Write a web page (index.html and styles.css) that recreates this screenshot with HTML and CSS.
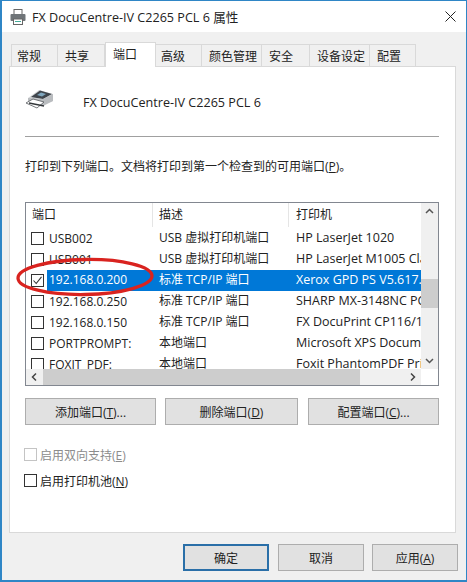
FILE: index.html
```html
<!DOCTYPE html>
<html lang="zh-CN">
<head>
<meta charset="utf-8">
<title>FX DocuCentre-IV C2265 PCL 6 属性</title>
<link rel="stylesheet" href="styles.css">
</head>
<body>
<div class="window">
  <div class="titlebar">
    <svg class="title-icon" width="16" height="16" viewBox="0 0 16 16"><rect x="4" y="0.5" width="8" height="5" fill="#fff" stroke="#666"/><rect x="0.5" y="5" width="15" height="7" rx="1" fill="#6f7478"/><rect x="3.5" y="10" width="9" height="5.5" fill="#fff" stroke="#666"/><rect x="5" y="12" width="6" height="1" fill="#4a9"/></svg>
    <span class="title-text">FX DocuCentre-IV C2265 PCL 6 属性</span>
    <svg class="close-icon" width="11" height="11" viewBox="0 0 11 11"><path d="M0.5 0.5L10.5 10.5M10.5 0.5L0.5 10.5" stroke="#222" stroke-width="1" fill="none"/></svg>
  </div>
  <div class="tabs">
    <div class="tab w47">常规</div>
    <div class="tab w47">共享</div>
    <div class="tab active">端口</div>
    <div class="tab w46 tight">高级</div>
    <div class="tab w60">颜色管理</div>
    <div class="tab w48">安全</div>
    <div class="tab w60">设备设定</div>
    <div class="tab w46">配置</div>
  </div>
  <div class="panel">
    <div class="head">
      <svg class="printer" width="28" height="20" viewBox="0 0 28 20">
        <path d="M2 9L13 1L27 5L27 12L14 17L2 13Z" fill="#d4d6d8"/>
        <path d="M5 8L14 1.5L26 5L17 10Z" fill="#3f454b"/>
        <path d="M11 6L15 3.5L20 5L16 7.500Z" fill="#7fa6bd"/>
        <path d="M2 9L17 10L27 5L27 12L17 17L2 13Z" fill="#b9bcbf"/>
        <path d="M0 14L7 10L18 13L11 19Z" fill="#fff" stroke="#55595d" stroke-width="0.8"/>
        <path d="M3 14L18 17" stroke="#33373a" stroke-width="1.4"/>
      </svg>
      <span class="head-text">FX DocuCentre-IV C2265 PCL 6</span>
    </div>
    <div class="sep"></div>
    <div class="label">打印到下列端口。文档将打印到第一个检查到的可用端口(<u>P</u>)。</div>
    <div class="listframe">
      <div class="listmain">
        <div class="row header">
          <div class="col c1 hcell">端口</div>
          <div class="col c2 hcell">描述</div>
          <div class="col c3 hcell">打印机</div>
        </div>
        <div class="rows">
          <div class="row"><div class="col c1"><span class="box"></span>USB002</div><div class="col c2">USB 虚拟打印机端口</div><div class="col c3">HP LaserJet 1020</div></div>
          <div class="row"><div class="col c1"><span class="box"></span>USB001</div><div class="col c2">USB 虚拟打印机端口</div><div class="col c3">HP LaserJet M1005 Class Driver</div></div>
          <div class="row selected"><div class="col c1"><span class="box"><svg width="11" height="11" viewBox="0 0 11 11"><path d="M1.500 5.500L4.200 8.500L9.500 1.800" fill="none" stroke="#333" stroke-width="1.100"/></svg></span><span class="sel-text">192.168.0.200</span></div><div class="col c2 sel-text">标准 TCP/IP 端口</div><div class="col c3 sel-text">Xerox GPD PS V5.617.8</div></div>
          <div class="row"><div class="col c1"><span class="box"></span>192.168.0.250</div><div class="col c2">标准 TCP/IP 端口</div><div class="col c3">SHARP MX-3148NC PCL6</div></div>
          <div class="row"><div class="col c1"><span class="box"></span>192.168.0.150</div><div class="col c2">标准 TCP/IP 端口</div><div class="col c3">FX DocuPrint CP116/115</div></div>
          <div class="row"><div class="col c1"><span class="box"></span>PORTPROMPT:</div><div class="col c2">本地端口</div><div class="col c3">Microsoft XPS Document Writer</div></div>
          <div class="row"><div class="col c1"><span class="box"></span>FOXIT_PDF:</div><div class="col c2">本地端口</div><div class="col c3">Foxit PhantomPDF Printer</div></div>
        </div>
      </div>
      <div class="vbar">
        <svg class="arrow" width="17" height="17" viewBox="0 0 17 17"><path d="M5 10L8.500 6.500L12 10" fill="none" stroke="#555" stroke-width="1.500"/></svg>
        <div class="vtrack"><div class="vthumb"></div></div>
        <svg class="arrow" width="17" height="17" viewBox="0 0 17 17"><path d="M5 7L8.500 10.500L12 7" fill="none" stroke="#555" stroke-width="1.500"/></svg>
      </div>
      <div class="hbar">
        <svg class="arrow" width="17" height="16" viewBox="0 0 17 16"><path d="M10 4.500L6.500 8L10 11.500" fill="none" stroke="#444" stroke-width="1.500"/></svg>
        <div class="hthumb"></div>
        <svg class="arrow" width="17" height="16" viewBox="0 0 17 16"><path d="M7 4.500L10.500 8L7 11.500" fill="none" stroke="#444" stroke-width="1.500"/></svg>
      </div>
      <div class="corner"></div>
    </div>
    <div class="actions">
      <div class="btn"><span>添加端口(<u>T</u>)...</span></div>
      <div class="btn"><span>删除端口(<u>D</u>)</span></div>
      <div class="btn"><span>配置端口(<u>C</u>)...</span></div>
    </div>
    <div class="checks">
      <div class="check disabled"><span class="box"></span><span>启用双向支持(<u>E</u>)</span></div>
      <div class="check"><span class="box"></span><span>启用打印机池(<u>N</u>)</span></div>
    </div>
  </div>
  <div class="footer">
    <div class="btn ok">确定</div>
    <div class="btn">取消</div>
    <div class="btn"><span>应用(<u>A</u>)</span></div>
  </div>
  <svg class="marker" width="142" height="44" viewBox="0 0 142 44"><ellipse cx="71" cy="21" rx="67" ry="17.500" fill="none" stroke="#d9231f" stroke-width="3.300" transform="rotate(-1 71 21)"/></svg>
</div>
</body>
</html>
```
FILE: styles.css
```css
* { box-sizing: border-box; }
html, body { margin: 0; padding: 0; }
body {
  width: 467px;
  height: 582px;
  overflow: hidden;
  font-family: "Open Sans", "Noto Sans CJK SC", sans-serif;
  font-size: 12px;
  color: #222;
}
u { text-decoration: underline; }
.window {
  position: relative;
  width: 467px;
  height: 582px;
  display: flex;
  flex-direction: column;
  background: #f0f0f0;
  border: 1px solid #2f86c6;
  border-left-width: 2px;
  border-bottom-width: 2px;
}
.titlebar {
  height: 31px;
  background: #fff;
  display: flex;
  align-items: center;
  padding: 0 10px 0 8px;
  flex: none;
}
.title-icon { flex: none; }
.title-text { margin-left: 6px; font-size: 12.600px; flex: 1; white-space: nowrap; color: #222; }
.close-icon { flex: none; }
.tabs {
  display: flex;
  align-items: flex-end;
  height: 34px;
  padding-left: 9px;
  flex: none;
  position: relative;
  z-index: 1;
}
.tab {
  height: 22px;
  background: #f0f0f0;
  border: 1px solid #d9d9d9;
  border-bottom: none;
  border-left-width: 0;
  display: flex;
  align-items: center;
  padding-left: 7px;
  white-space: nowrap;
  color: #222;
}
.tab:first-child { border-left-width: 1px; padding-left: 5px; }
.tab.tight { padding-left: 5px; }
.w47 { width: 47px; }
.w46 { width: 46px; }
.w48 { width: 48px; }
.w60 { width: 60px; }
.tab.active {
  width: 51px;
  height: 25px;
  margin-bottom: -1px;
  background: #fff;
  border-left-width: 1px;
  padding: 0 0 2px 7px;
}
.panel {
  margin-left: 7px;
  width: 447px;
  height: 467px;
  background: #fff;
  border: 1px solid #d9d9d9;
  padding: 22px 16px 0 15px;
  flex: none;
}
.head {
  display: flex;
  height: 26px;
  align-items: center;
}
.printer { align-self: flex-start; flex: none; margin-left: 1px; }
.head-text { margin-left: 29px; font-size: 12.600px; white-space: nowrap; }
.sep { height: 1px; background: #a0a0a0; margin-top: 21px; }
.label { height: 16px; line-height: 15px; margin-top: 22px; white-space: nowrap; }
.listframe {
  margin-top: 27px;
  height: 184px;
  border: 1px solid #828790;
  display: grid;
  grid-template-columns: 395px 17px;
  grid-template-rows: 166px 16px;
}
.listmain { overflow: hidden; background: #fff; }
.row {
  display: flex;
  height: 21px;
  line-height: 20px;
  white-space: nowrap;
}
.header { height: 25px; line-height: 24px; }
.col { overflow: hidden; flex: none; }
.c1 { width: 127px; display: flex; align-items: center; padding-left: 5px; }
.c2 { width: 136px; padding-left: 6px; }
.c3 { width: 132px; padding-left: 7px; font-size: 12.500px; }
.hcell { display: block; padding-left: 6px; border-right: 1px solid #e5e5e5; height: 24px; }
.hcell.c3 { border-right: none; padding-left: 7px; font-size: 12px; }
.rows { height: 141px; overflow: hidden; }
.box {
  display: inline-flex;
  align-items: center;
  justify-content: center;
  width: 13px;
  height: 13px;
  border: 1px solid #333;
  background: #fff;
  flex: none;
}
.c1 .box { margin-right: 5px; }
.selected .c2, .selected .c3 { background: #0078d7; }
.sel-text { color: #fff; }
.c1 .sel-text {
  background: #0078d7;
  flex: 1;
  height: 21px;
  margin-left: -2px;
  padding-left: 2px;
}
.vbar {
  background: #f0f0f0;
  display: flex;
  flex-direction: column;
}
.arrow { flex: none; display: block; }
.vtrack { flex: 1; padding-top: 59px; }
.vthumb { height: 29px; background: #cdcdcd; }
.hbar {
  background: #f0f0f0;
  display: flex;
}
.hthumb { width: 317px; background: #cdcdcd; margin-right: 44px; }
.corner { background: #fff; }
.btn {
  display: flex;
  align-items: center;
  justify-content: center;
  height: 27px;
  background: #e1e1e1;
  border: 1px solid #adadad;
  color: #222;
  white-space: nowrap;
}
.actions {
  margin-top: 12px;
  display: grid;
  grid-template-columns: 131px 133px 132px;
  column-gap: 9px;
}
.actions .btn:last-child { margin-left: 1px; }
.checks {
  margin-top: 23px;
  margin-left: -1px;
  display: flex;
  flex-direction: column;
  gap: 13px;
}
.check { display: flex; align-items: center; height: 13px; white-space: nowrap; gap: 3px; }
.disabled { color: #8c8c8c; }
.disabled .box { border-color: #c4c4c4; }
.footer {
  flex: 1;
  display: flex;
  justify-content: flex-end;
  gap: 8px;
  padding: 11px 8px 0 0;
}
.footer .btn { width: 86px; }
.footer .ok { border: 2px solid #2a6fa8; margin-right: 1px; }
.marker { position: absolute; left: 12px; top: 255px; }
```
